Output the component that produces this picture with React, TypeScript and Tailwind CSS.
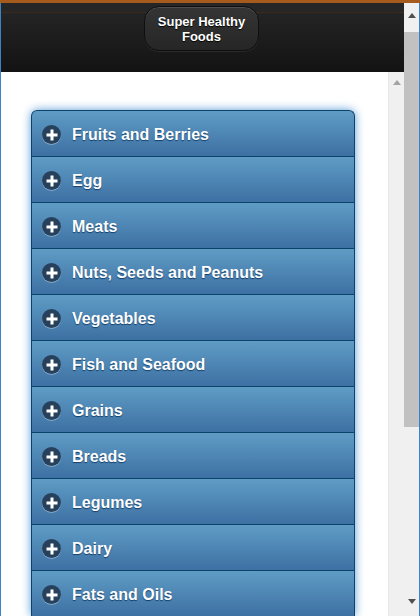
import { Fragment } from 'react'

const foods = [
  'Fruits and Berries',
  'Egg',
  'Meats',
  'Nuts, Seeds and Peanuts',
  'Vegetables',
  'Fish and Seafood',
  'Grains',
  'Breads',
  'Legumes',
  'Dairy',
  'Fats and Oils',
]

function PlusIcon() {
  return (
    <span className="w-[19px] h-[19px] rounded-full bg-[#27405b] shadow-[0_1px_0_rgba(255,255,255,0.35)] flex items-center justify-center shrink-0">
      <svg width="12" height="12" viewBox="0 0 12 12">
        <rect x="4.5" y="0.5" width="3" height="11" fill="#fff" />
        <rect x="0.5" y="4.5" width="11" height="3" fill="#fff" />
      </svg>
    </span>
  )
}

function Arrow({ up, color }: { up?: boolean; color: string }) {
  return (
    <svg width="8" height="5" viewBox="0 0 8 5">
      <polygon points={up ? '4,0 8,5 0,5' : '0,0 8,0 4,5'} fill={color} />
    </svg>
  )
}

export default function App() {
  return (
    <div className="w-[420px] h-[616px] overflow-hidden flex flex-col bg-white font-['Liberation_Sans',Arial,sans-serif]">
      <div className="h-[3px] bg-[#a65b1c] shrink-0" />
      <div className="flex flex-1 min-h-0 border-l border-r border-[#3b83c9]">
        <div className="flex-1 flex flex-col min-w-0">
          {/* header */}
          <div className="h-[69px] shrink-0 flex justify-center pt-[3px] bg-[linear-gradient(to_bottom,#262626_0px,#262626_9px,#3b2a1c_9px,#3b2a1c_10px,#242424_10px,#131313_100%)]">
            <div className="w-[115px] h-[45px] -ml-[2px] rounded-[15px] border border-[#0f0f0f] bg-[linear-gradient(to_bottom,#353535,#262626)] shadow-[inset_0_1px_0_rgba(255,255,255,0.12),0_1px_0_rgba(255,255,255,0.08)] flex items-center justify-center text-center text-white font-bold text-[13px] leading-[15px] [text-shadow:0_1px_1px_#000]">
              Super Healthy<br />Foods
            </div>
          </div>

          <div className="flex flex-1 min-h-0">
            {/* list */}
            <div className="flex-1 min-w-0 pt-[38px] pl-[30px] pr-[33px] bg-white">
              <div className="rounded-t-[6px] shadow-[0_0_10px_#5a9ad6]">
                {foods.map((f, i) => (
                  <Fragment key={f}>
                    <div
                      className={
                        'h-[46px] flex items-center gap-[11px] pl-[10px] pt-[2px] border border-b-0 border-[#0b4369] bg-[linear-gradient(to_bottom,#5f9cc5,#3d70a3)] text-white font-bold text-[16px] [text-shadow:0_1px_1px_#143e68] ' +
                        (i === 0 ? 'rounded-t-[6px]' : '')
                      }
                    >
                      <PlusIcon />
                      <span>{f}</span>
                    </div>
                  </Fragment>
                ))}
              </div>
            </div>
            {/* inner scrollbar */}
            <div className="w-[16px] shrink-0 bg-[#f0f0f0] border-l border-[#e6e6e6] flex flex-col items-center pt-[8px]">
              <Arrow up color="#a3a3a3" />
            </div>
          </div>
        </div>

        {/* outer scrollbar */}
        <div className="w-[15px] shrink-0 bg-[#f0f0f0] flex flex-col items-center">
          <div className="h-[29px] flex items-center justify-center pb-[4px]">
            <Arrow up color="#505050" />
          </div>
          <div className="w-[15px] h-[395px] bg-[#c1c1c1]" />
          <div className="flex-1" />
          <div className="h-[17px] flex items-start justify-center">
            <Arrow color="#505050" />
          </div>
        </div>
      </div>
    </div>
  )
}
